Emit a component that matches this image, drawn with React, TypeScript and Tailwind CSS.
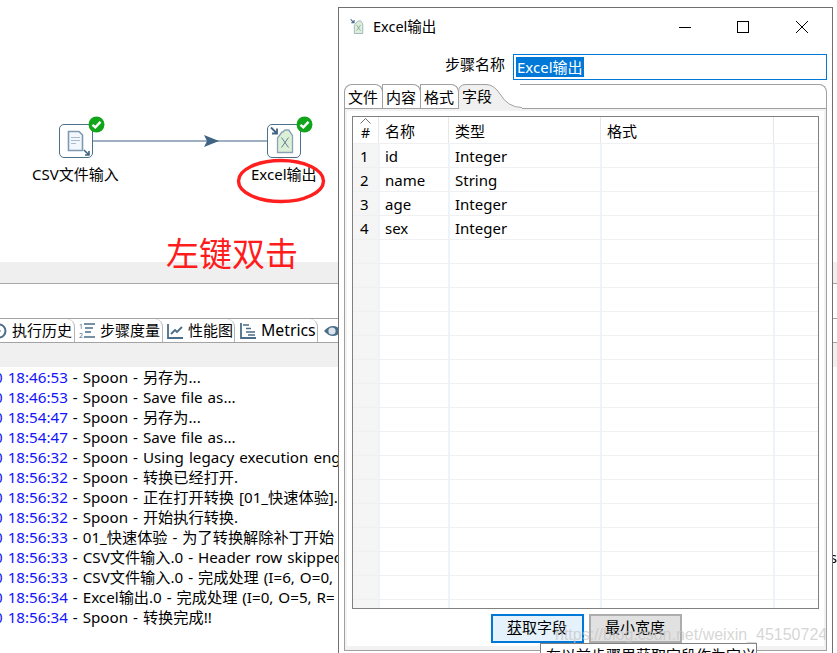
const LOG_ROWS: [string, string][] = [
  ["18:46:53", " - Spoon - 另存为..."],
  ["18:46:53", " - Spoon - Save file as..."],
  ["18:54:47", " - Spoon - 另存为..."],
  ["18:54:47", " - Spoon - Save file as..."],
  ["18:56:32", " - Spoon - Using legacy execution engine"],
  ["18:56:32", " - Spoon - 转换已经打开."],
  ["18:56:32", " - Spoon - 正在打开转换 [01_快速体验]."],
  ["18:56:32", " - Spoon - 开始执行转换."],
  ["18:56:33", " - 01_快速体验 - 为了转换解除补丁开始"],
  ["18:56:33", " - CSV文件输入.0 - Header row skipped"],
  ["18:56:33", " - CSV文件输入.0 - 完成处理 (I=6, O=0,"],
  ["18:56:34", " - Excel输出.0 - 完成处理 (I=0, O=5, R="],
  ["18:56:34", " - Spoon - 转换完成!!"],
];

const FIELDS = [
  ["1", "id", "Integer"],
  ["2", "name", "String"],
  ["3", "age", "Integer"],
  ["4", "sex", "Integer"],
];

function CheckBadge() {
  return (
    <svg width="17" height="17" viewBox="0 0 17 17" className="absolute -top-[9px] -right-[13px]">
      <circle cx="8.5" cy="8.5" r="8" fill="#12a51b" />
      <path d="M4.5 8.8 L7.3 11.4 L12.5 5.9" fill="none" stroke="#fff" strokeWidth="2.4" />
    </svg>
  );
}

function CsvGlyph() {
  return (
    <svg width="32" height="32" viewBox="0 0 32 32">
      <path d="M8.5 6.5 H19 L22.5 10 V25.5 H8.5 Z" fill="#f1f7fc" stroke="#7f9ab0" strokeWidth="1.6" />
      <path d="M11 12.5 H20 M11 15.5 H20 M11 18.5 H16" stroke="#a9bccb" strokeWidth="1" />
      <path d="M24 25 L29 30 M29 26 V30 H25" fill="none" stroke="#3f6383" strokeWidth="1.6" />
    </svg>
  );
}

function ExcelGlyph({ size = 32 }: { size?: number }) {
  return (
    <svg width={size} height={size} viewBox="0 0 32 32">
      <path d="M9.5 13 L14 7 H15 Q16 5 18 5 H20 Q21.5 5 22 7 L24.5 10.5 V27.5 H9.5 Z" fill="#dcf0d8" stroke="#8aa2b3" strokeWidth="1.3" />
      <path d="M13.5 12.5 L20.5 22.5 M20.5 12.5 L13.5 22.5" stroke="#5f7f96" strokeWidth="1" />
      <path d="M3 2.5 L9 8.5 M9 3.5 V8.5 H4" fill="none" stroke="#3f6383" strokeWidth="1.8" />
    </svg>
  );
}

function StepNode({ label, labelClass, children }: { label: string; labelClass: string; children: React.ReactNode }) {
  return (
    <>
      <div className="relative flex h-[34px] w-[34px] items-center justify-center rounded-[5px] border border-[#4d7089] bg-white">
        {children}
        <CheckBadge />
      </div>
      <span className={`absolute top-[40px] whitespace-nowrap text-[15px] leading-[20px] text-black ${labelClass}`}>
        {label}
      </span>
    </>
  );
}

function Canvas() {
  return (
    <div className="relative h-[262px] shrink-0 bg-white">
      <svg width="180" height="16" viewBox="0 0 180 16" className="absolute left-[90px] top-[133px]">
        <path d="M0 8 H180" stroke="#3f6383" strokeWidth="1.2" />
        <path d="M114 2 L129 8 L114 14 L117 8 Z" fill="#3f6383" />
      </svg>
      <div className="absolute left-[59px] top-[124px]">
        <StepNode label="CSV文件输入" labelClass="-left-[27px]">
          <CsvGlyph />
        </StepNode>
      </div>
      <div className="absolute left-[267px] top-[124px]">
        <StepNode label="Excel输出" labelClass="-left-[16px]">
          <ExcelGlyph />
        </StepNode>
      </div>
      <svg width="92" height="46" viewBox="0 0 92 46" className="absolute left-[236px] top-[158px]">
        <ellipse cx="45" cy="23" rx="42.5" ry="20.5" fill="none" stroke="#ff1f1f" strokeWidth="3.4" />
      </svg>
      <span className="absolute left-[166px] top-[230px] text-[33px] leading-[48px] text-[#ff1c1c]">左键双击</span>
    </div>
  );
}

function ClockIcon() {
  return (
    <svg width="16" height="16" viewBox="0 0 16 16" className="shrink-0">
      <circle cx="8" cy="8" r="6.5" fill="none" stroke="#4a6d88" strokeWidth="2" />
      <circle cx="8" cy="8" r="1.6" fill="#4a6d88" />
    </svg>
  );
}

function BottomTabs() {
  return (
    <div className="flex h-[25px] shrink-0 items-stretch border-y border-[#a3a3a3] bg-white text-[15px] leading-[23px] text-black">
      <div className="-ml-[10px] flex w-[85px] items-center gap-[5px] rounded-tr-[8px] border-r border-[#b5b5b5] pl-[1px]">
        <ClockIcon />
        <span>执行历史</span>
      </div>
      <div className="flex w-[88px] items-center gap-[5px] rounded-tr-[8px] border-r border-[#b5b5b5] pl-[4px]">
        <svg width="17" height="17" viewBox="0 0 17 17" className="shrink-0">
          <text x="0" y="7" fontSize="7" fill="#4a6d88">1</text>
          <text x="0" y="16" fontSize="7" fill="#4a6d88">2</text>
          <path d="M5 2 H16 M6 6 H14 M6 10 H12 M5 15 H16" stroke="#4a6d88" strokeWidth="1.4" />
        </svg>
        <span className="-ml-[1px]">步骤度量</span>
      </div>
      <div className="flex w-[72px] items-center gap-[5px] rounded-tr-[8px] border-r border-[#b5b5b5] pl-[4px]">
        <svg width="16" height="16" viewBox="0 0 16 16" className="shrink-0">
          <path d="M1 1 V15 H16" fill="none" stroke="#4a6d88" strokeWidth="1.8" />
          <path d="M4 11 L8 7 L10 9 L15 4" fill="none" stroke="#4a6d88" strokeWidth="1.8" />
        </svg>
        <span>性能图</span>
      </div>
      <div className="flex w-[83px] items-center gap-[5px] rounded-tr-[8px] border-r border-[#b5b5b5] pl-[5px]">
        <svg width="16" height="17" viewBox="0 0 16 17" className="shrink-0">
          <path d="M1 1 V16 H16" fill="none" stroke="#4a6d88" strokeWidth="1.8" />
          <path d="M3 3 H9 M6 6.5 H11 M6 10 H15 M8 13 H15" stroke="#4a6d88" strokeWidth="1.7" />
        </svg>
        <span className="text-[15.8px]">Metrics</span>
      </div>
      <div className="flex items-center pl-[6px]">
        <svg width="18" height="14" viewBox="0 0 18 14" className="shrink-0">
          <path d="M0 7 Q9 -3 18 7 Q9 17 0 7 Z" fill="#4a6d88" />
          <circle cx="8" cy="7" r="3.6" fill="#dce5ec" />
        </svg>
      </div>
    </div>
  );
}

function LogPanel() {
  return (
    <div className="flex-1 bg-white text-[15.2px] leading-[20px] text-black [word-spacing:1px]">
      {LOG_ROWS.map(([time, text], i) => (
        <div key={i} className="flex h-[20px] items-center justify-between whitespace-pre">
          <span>
            <span className="-ml-[6px] text-[#1414ff]">0 {time}</span>
            {text}
          </span>
          {i === 9 && <span>s</span>}
        </div>
      ))}
    </div>
  );
}

function HeaderCell({ className, children }: { className: string; children?: React.ReactNode }) {
  return <div className={`h-full shrink-0 border-r border-[#e6e6e6] ${className}`}>{children}</div>;
}

function FieldTable() {
  const rows = Array.from({ length: 20 }, (_, i) => FIELDS[i] ?? ["", "", ""]);
  return (
    <div className="mx-[5px] mt-[5px] flex h-[493px] flex-col overflow-hidden border border-[#808080] bg-white text-[15px]">
      <div className="flex h-[27px] shrink-0 items-center border-b border-[#eef0f4] leading-[28px]">
        <HeaderCell className="relative w-[26px] text-center">
          <svg width="11" height="6" viewBox="0 0 11 6" className="absolute left-[7px] top-[1px]">
            <path d="M0.5 5.5 L5.5 0.5 L10.5 5.5" fill="none" stroke="#707070" />
          </svg>
          <span className="relative top-[1px] text-[14px]">#</span>
        </HeaderCell>
        <HeaderCell className="w-[70px] pl-[6px]">名称</HeaderCell>
        <HeaderCell className="w-[152px] pl-[6px]">类型</HeaderCell>
        <HeaderCell className="w-[173px] pl-[6px]">格式</HeaderCell>
        <div className="flex-1" />
      </div>
      {rows.map((row, i) => (
        <div key={i} className="flex h-[24px] shrink-0 items-stretch border-b border-[#eef0f4] leading-[24px]">
          <div className="w-[27px] shrink-0 border-r-2 border-[#eef2fb] bg-[#f5f5f5] pl-[7px]">{row[0]}</div>
          <div className="w-[70px] shrink-0 border-r-2 border-[#eef2fb] pl-[5px]">{row[1]}</div>
          <div className="w-[152px] shrink-0 border-r-2 border-[#eef2fb] pl-[5px]">{row[2]}</div>
          <div className="w-[173px] shrink-0 border-r-2 border-[#eef2fb]" />
        </div>
      ))}
    </div>
  );
}

function DialogTabs() {
  return (
    <div className="relative z-10 -mb-px flex h-[25px] items-stretch text-[15px] leading-[25px]">
      <div className="w-[39px] rounded-tl-[8px] rounded-tr-[8px] border border-b-0 border-[#a0a0a0] pl-[3px]">文件</div>
      <div className="-ml-px w-[39px] rounded-tr-[8px] border border-b-0 border-[#a0a0a0] pl-[3px]">内容</div>
      <div className="-ml-px w-[39px] rounded-tr-[8px] border border-b-0 border-[#a0a0a0] pl-[3px]">格式</div>
      <div className="relative -ml-px flex w-[62px] pl-[4px]">
        <svg width="64" height="25" viewBox="0 0 64 25" className="absolute left-0 top-0">
          <path d="M0 25 V8 Q0 0 8 0 H28 Q36 0 42 10 Q50 24 64 24 V25 Z" fill="#f0f0f0" />
          <path d="M0.5 25 V8 Q0.5 0.5 8 0.5 H28 Q36 0.5 42 10 Q50 23.5 64 23.5" fill="none" stroke="#a0a0a0" />
        </svg>
        <span className="relative">字段</span>
      </div>
      <div className="flex-1 rounded-tr-[8px] border-r border-t border-[#a0a0a0]" />
    </div>
  );
}

function Dialog() {
  return (
    <div className="absolute left-[338px] top-[7px] h-[680px] w-[495px] border border-[#707070] bg-white text-[15px] text-black">
      <div className="flex h-[38px] items-center pl-[10px]">
        <ExcelGlyph size={18} />
        <span className="ml-[6px] text-[14.5px]">Excel输出</span>
        <div className="ml-auto flex items-center">
          <svg width="58" height="14" viewBox="0 0 14 14" className="shrink-0">
            <path d="M1 7.5 H13" stroke="#000" strokeWidth="1" />
          </svg>
          <svg width="58" height="14" viewBox="0 0 14 14" className="shrink-0">
            <rect x="1.5" y="1.5" width="11" height="11" fill="none" stroke="#000" />
          </svg>
          <svg width="60" height="14" viewBox="0 0 14 14" className="shrink-0">
            <path d="M1 1 L13 13 M13 1 L1 13" stroke="#000" strokeWidth="1" />
          </svg>
        </div>
      </div>
      <div className="mt-[8px] flex h-[26px] items-center pr-[5px]">
        <span className="relative -top-[3px] w-[166px] text-right leading-[20px]">步骤名称</span>
        <div className="ml-[8px] flex h-[26px] flex-1 items-center border border-[#0078d7] pl-[2px]">
          <span className="bg-[#0078d7] px-[1px] leading-[20px] text-white">Excel输出</span>
        </div>
      </div>
      <div className="mx-[5px] mt-[4px]">
        <DialogTabs />
        <div className="h-[543px] border border-[#a0a0a0] bg-white">
          <div className="h-full border-2 border-b-[4px] border-[#f2f2f2]">
            <FieldTable />
            <div className="mt-[5px] flex h-[29px] justify-center gap-[5px] pl-[1px]">
              <button className="h-[29px] w-[93px] border-2 border-[#0078d7] bg-[#e5f1fb] pb-[3px] text-[15px] leading-[20px]">
                <span className="underline">获</span>取字段
              </button>
              <button className="h-[29px] w-[93px] border-2 border-[#adadad] bg-[#e1e1e1] pb-[3px] text-[15px] leading-[20px]">
                最小宽度
              </button>
            </div>
          </div>
        </div>
      </div>
    </div>
  );
}

export default function App() {
  return (
    <div className="relative h-[653px] w-[837px] overflow-hidden bg-white font-['Noto_Sans','Noto_Sans_CJK_SC',sans-serif]">
      <div className="flex h-full flex-col">
        <Canvas />
        <div className="h-[22px] shrink-0 border-b border-[#a8a8a8] bg-[#efefef]" />
        <div className="h-[34px] shrink-0 bg-white" />
        <BottomTabs />
        <div className="h-[24px] shrink-0 bg-[#f0f0f0]" />
        <LogPanel />
      </div>
      <Dialog />
      {/* tooltip of the hovered button, cut by the window edge */}
      <div className="absolute left-[540px] top-[643px] h-[30px] w-[217px] border border-[#808080] bg-white pl-[5px] text-[15px] leading-[22px] text-black">
        在以前步骤里获取字段作为定义
      </div>
      {/* blog watermark */}
      <span className="pointer-events-none absolute left-[555px] top-[625px] font-['Liberation_Sans',sans-serif] text-[16px] leading-[20px] text-[#c4c4c4]/70">
        https://blog.csdn.net/weixin_45150724
      </span>
    </div>
  );
}
